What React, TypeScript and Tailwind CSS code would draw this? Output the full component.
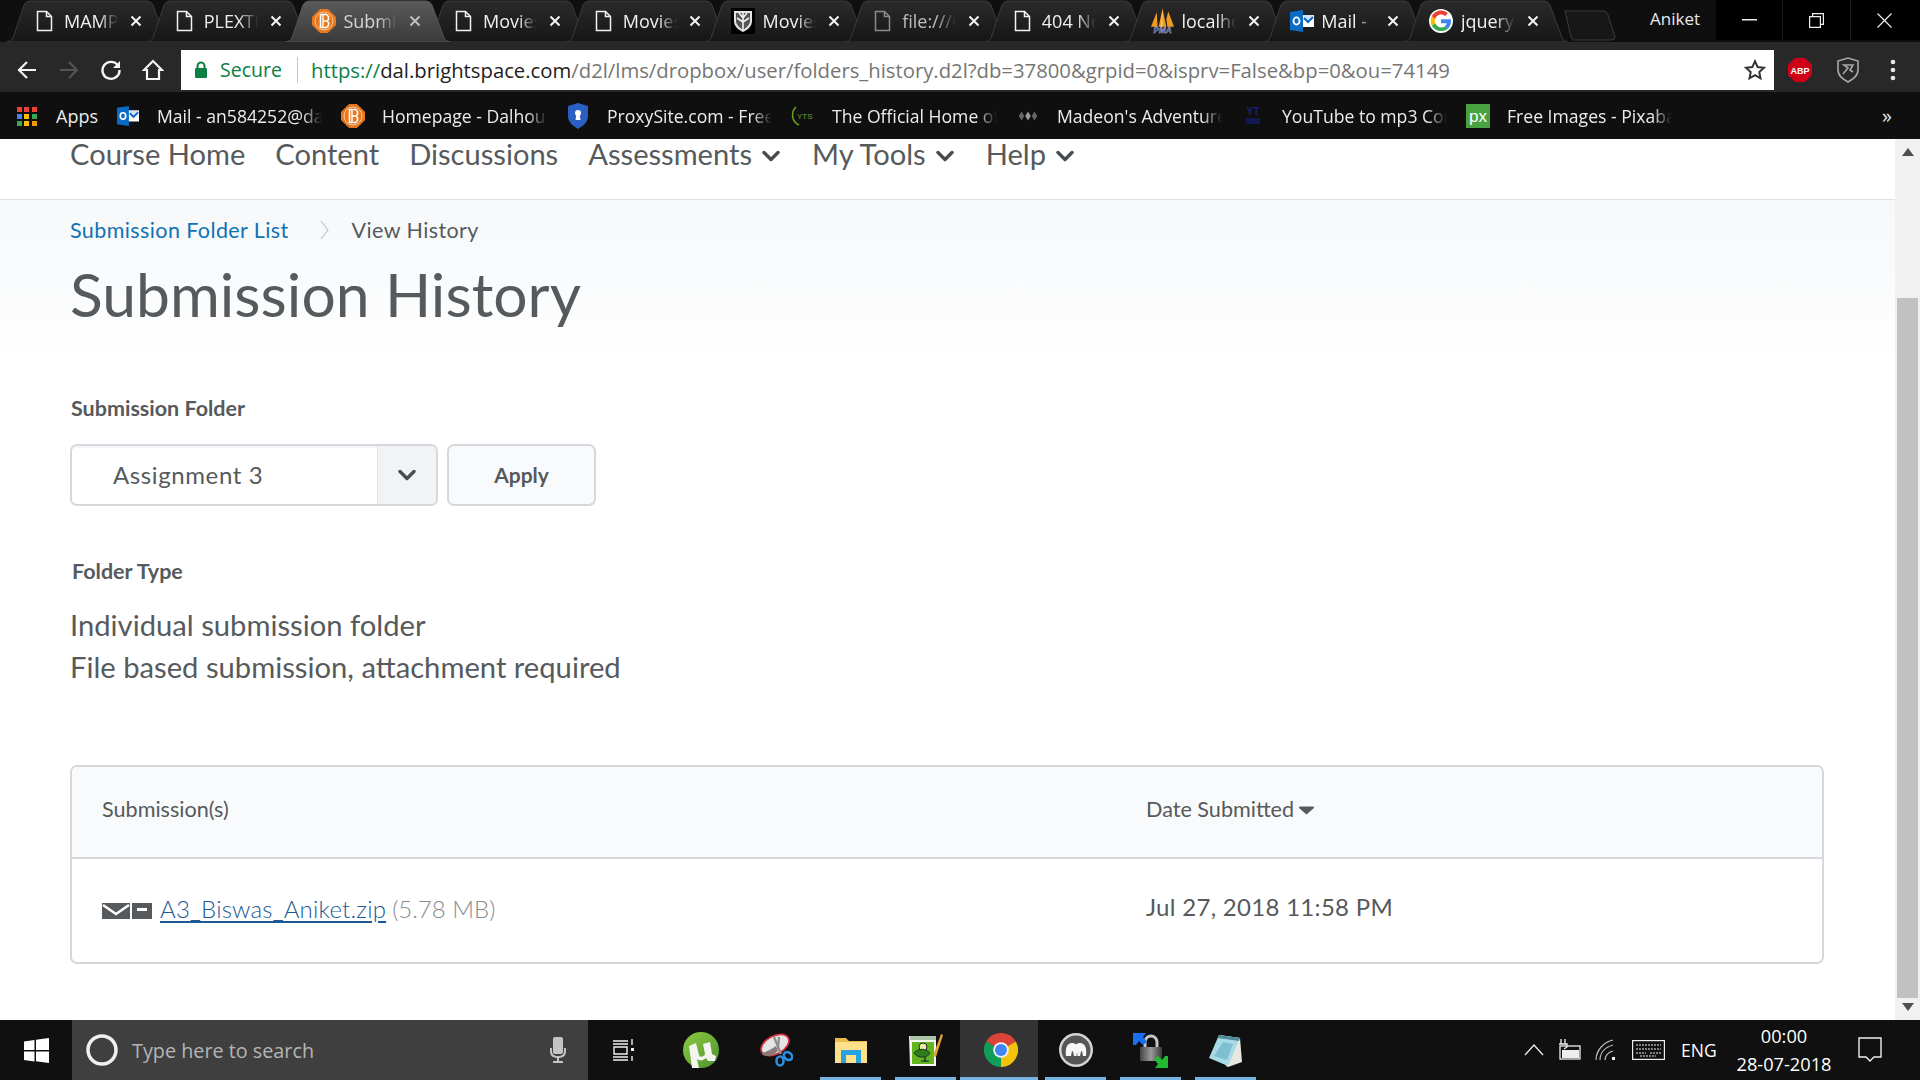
import React from "react";

const ui = "font-['Open_Sans','Noto_Sans',sans-serif]";

function Doc({ dim = false }: { dim?: boolean }) {
  return (
    <svg width="17" height="22" viewBox="0 0 17 22" fill="none" stroke={dim ? "#8a8a8a" : "#f2f2f2"} strokeWidth="1.5">
      <path d="M1.500 1.500h9l5 5v14h-14z" />
      <path d="M10.500 1.500v5h5" />
    </svg>
  );
}
function Bright({ size = 24 }: { size?: number }) {
  return (
    <svg width={size} height={size} viewBox="0 0 24 24">
      <path d="M8 .500h8l7.500 7.500v8L16 23.500H8L.500 16V8z" fill="#e8781e" strokeLinejoin="round" stroke="#e8781e" />
      <circle cx="12" cy="12" r="9" fill="none" stroke="#f9c896" strokeWidth="1" />
      <path d="M8.500 5.500h6l2 2v3l-1.500 1.500 1.500 1.500v3l-2 2h-6z" fill="none" stroke="#fff" strokeWidth="1.600" />
      <path d="M11 5.500v13M11 12h4" stroke="#fff" strokeWidth="1.400" />
    </svg>
  );
}
function Crest() {
  return (
    <svg width="24" height="26" viewBox="0 0 24 26">
      <rect width="24" height="26" fill="#000" />
      <path d="M3 3h18v10c0 6-5 9-9 11-4-2-9-5-9-11z" fill="#e4e4e4" />
      <path d="M5 5h14v8c0 4-4 7-7 9-3-2-7-5-7-9z" fill="#555" />
      <path d="M12 5v17M6 10l6 4 6-4M8 5l4 5 4-5" stroke="#f2f2f2" strokeWidth="1.600" fill="none" />
    </svg>
  );
}
function Pma() {
  return (
    <svg width="26" height="28" viewBox="0 0 26 28">
      <path d="M7 5 1 20h7zM9 20h8L13 1zM19 4l-2 8 1 8h7z" fill="#f29a1f" />
      <path d="M13 1l-2 19h2z" fill="#f8c96a" />
      <text x="13" y="27" textAnchor="middle" fontSize="8.500" fontWeight="700" fontStyle="italic" fill="#3f4f96" stroke="#cfd4ec" strokeWidth=".300" fontFamily="Liberation Sans">PMA</text>
    </svg>
  );
}
function Outlook({ size = 24 }: { size?: number }) {
  return (
    <svg width={size} height={size} viewBox="0 0 24 24">
      <path d="M12 6h12v12H12z" fill="#fff" />
      <path d="M12 6h12l-6 6z" fill="#cfe4f7" />
      <path d="M14 9l4 4 5-5" stroke="#0a66c2" strokeWidth="2" fill="none" />
      <path d="M0 3l13-2v22L0 21z" fill="#0a6cc4" />
      <ellipse cx="6.500" cy="12" rx="3" ry="3.600" fill="none" stroke="#fff" strokeWidth="1.800" />
    </svg>
  );
}
function GoogleG() {
  return (
    <svg width="24" height="24" viewBox="0 0 48 48">
      <circle cx="24" cy="24" r="24" fill="#fff" />
      <path fill="#4285F4" d="M44 24.500c0-1.400-.1-2.700-.4-4H24v8h11.300c-.5 2.600-2 4.800-4.200 6.300l6.500 5c3.900-3.500 6.400-8.900 6.400-15.300z" />
      <path fill="#34A853" d="M24 44c5.400 0 10-1.800 13.600-4.200l-6.500-5c-1.800 1.200-4.200 2-7.100 2-5.400 0-10-3.700-11.700-8.600l-6.700 5.200C9 39.400 16 44 24 44z" />
      <path fill="#FBBC05" d="M12.300 28.200c-.4-1.300-.7-2.700-.7-4.200s.3-2.900.7-4.200l-6.700-5.200C4.200 17.300 3.400 20.600 3.400 24s.8 6.700 2.200 9.400z" />
      <path fill="#EA4335" d="M24 11.200c3 0 5.800 1 8 3.100l5.800-5.800C34.100 5.100 29.500 3.200 24 3.200 16 3.200 9 7.800 5.600 14.600l6.700 5.200c1.700-4.900 6.300-8.600 11.700-8.600z" />
    </svg>
  );
}

const tabs = [
  { icon: <Doc />, title: "MAMP" },
  { icon: <Doc />, title: "PLEXTR" },
  { icon: <Bright />, title: "Submission", active: true },
  { icon: <Doc />, title: "Movies" },
  { icon: <Doc />, title: "Movies" },
  { icon: <Crest />, title: "Movies" },
  { icon: <Doc dim />, title: "file:///C", dim: true },
  { icon: <Doc />, title: "404 Not" },
  { icon: <Pma />, title: "localhost" },
  { icon: <Outlook />, title: "Mail - " },
  { icon: <GoogleG />, title: "jquery" },
];

function Tab({ icon, title, active, dim }: { icon: React.ReactNode; title: string; active?: boolean; dim?: boolean }) {
  return (
    <div className={`relative w-[139.700px] h-full shrink-0 flex items-center pl-[29px] ${active ? "z-10" : ""}`}>
      <svg className="absolute left-[4px] top-0" width="166" height="42" viewBox="0 0 166 42" fill="none">
        <defs>
          <linearGradient id="tabActive" x1="0" y1="0" x2="0" y2="1">
            <stop offset="0" stopColor="#5a5a5a" />
            <stop offset="1" stopColor="#3a3a3a" />
          </linearGradient>
          <linearGradient id="tabIdle" x1="0" y1="0" x2="0" y2="1">
            <stop offset="0" stopColor="#2a2a2a" />
            <stop offset="1" stopColor="#161616" />
          </linearGradient>
        </defs>
        <path
          d="M0 42q4 0 6-4L17 5q2-4 6-4H140q4 0 6 4L158 38q2 4 6 4z"
          fill={active ? "url(#tabActive)" : "url(#tabIdle)"}
          stroke={active ? "#555" : "#3a3a3a"}
          strokeWidth="1"
        />
      </svg>
      <div className="relative w-[25px] flex justify-center shrink-0">{icon}</div>
      <span
        className={`relative ml-[7px] w-[54px] overflow-hidden whitespace-nowrap text-[18px] leading-[24px] [mask-image:linear-gradient(to_right,black_65%,transparent)] ${
          dim ? "text-[#bdbdbd]" : active ? "text-[#d6d6d6]" : "text-[#f0f0f0]"
        }`}
      >
        {title}
      </span>
      <svg className="relative ml-[12px]" width="12" height="12" viewBox="0 0 12 12" stroke={active ? "#bdbdbd" : "#f5f5f5"} strokeWidth="2">
        <path d="M1.500 1.500l9 9M10.500 1.500l-9 9" />
      </svg>
    </div>
  );
}

function TabStrip() {
  return (
    <div className="relative flex h-[42px] bg-[#0f0f0f] pl-[3px] overflow-hidden">
      {tabs.map((t, i) => (
        <Tab key={i} {...t} />
      ))}
      <svg className="ml-[24px] mt-[10px] shrink-0" width="52" height="31" viewBox="0 0 52 31">
        <path d="M1 1h38q4 0 5 4l7 22q0 3-4 3H10q-2 0-3-3z" fill="#171717" stroke="#3b3b3b" />
      </svg>
      <div className="flex-1" />
      <span className="text-[#e8e8e8] text-[17px] leading-[38px] mr-[16px]">Aniket</span>
      <div className="flex h-[40px] w-[204px] bg-black shrink-0">
        <div className="w-[67px] flex items-center justify-center border-r border-[#1b1b1b]">
          <svg width="15" height="2"><rect width="15" height="1.500" fill="#eee" /></svg>
        </div>
        <div className="w-[68px] flex items-center justify-center border-r border-[#1b1b1b]">
          <svg width="15" height="15" viewBox="0 0 15 15" fill="none" stroke="#eee" strokeWidth="1.200">
            <path d="M.600 3.600h10.800v10.800H.600zM3.600 3.600V.600h10.800v10.800h-3" />
          </svg>
        </div>
        <div className="w-[69px] flex items-center justify-center pr-[2px]">
          <svg width="15" height="15" viewBox="0 0 15 15" stroke="#eee" strokeWidth="1.200">
            <path d="M.500.500l14 14M14.500.500l-14 14" />
          </svg>
        </div>
      </div>
    </div>
  );
}

function Toolbar() {
  return (
    <div className="flex items-center h-[50px] bg-[#282828] pt-[8px] pb-[2px]">
      <div className="w-[181px] shrink-0 flex items-center pl-[16px] gap-[20px]">
        <svg width="22" height="22" viewBox="0 0 22 22" fill="none" stroke="#f5f5f5" strokeWidth="2.200"><path d="M20 11H3M11 3l-8 8 8 8" /></svg>
        <svg width="22" height="22" viewBox="0 0 22 22" fill="none" stroke="#555" strokeWidth="2.200"><path d="M2 11h17M11 3l8 8-8 8" /></svg>
        <svg width="22" height="22" viewBox="0 0 22 22" fill="none" stroke="#f5f5f5" strokeWidth="2.400"><path d="M18 6.500A8.500 8.500 0 1 0 19.500 11" /><path d="M20 2v7h-7z" fill="#f5f5f5" stroke="none" /></svg>
        <svg width="22" height="22" viewBox="0 0 22 22" fill="none" stroke="#f5f5f5" strokeWidth="2.200"><path d="M11 2 2 11h3v9h12v-9h3z" /></svg>
      </div>
      <div className="flex-none w-[1593px] h-[40px] bg-white flex items-center">
        <div className="w-[39px] flex justify-center">
          <svg width="14" height="18" viewBox="0 0 14 18"><path d="M3.500 8V5a3.500 3.500 0 0 1 7 0v3" fill="none" stroke="#0b8043" strokeWidth="2" /><rect x="1" y="7" width="12" height="10" rx="1" fill="#0b8043" /></svg>
        </div>
        <span className="text-[#0b8043] text-[19.500px] leading-none w-[77px]">Secure</span>
        <div className="w-px h-[26px] bg-[#c8c8c8] mr-[13px]" />
        <span className="text-[20.300px] leading-none whitespace-nowrap flex-1">
          <span className="text-[#0b8043]">https://</span>
          <span className="text-[#212121]">dal.brightspace.com</span>
          <span className="text-[#757575]">/d2l/lms/dropbox/user/folders_history.d2l?db=37800&amp;grpid=0&amp;isprv=False&amp;bp=0&amp;ou=74149</span>
        </span>
        <svg className="mr-[8px]" width="22" height="22" viewBox="0 0 24 24" fill="none" stroke="#333" strokeWidth="2.200"><path d="M12 2.500l2.900 6.300 6.800.8-5 4.700 1.300 6.800-6-3.400-6 3.400 1.300-6.800-5-4.700 6.800-.8z" /></svg>
      </div>
      <div className="flex-1 flex items-center pl-[13px]">
        <svg width="26" height="26" viewBox="0 0 26 26">
          <path d="M8 1h10l7 7v10l-7 7H8l-7-7V8z" fill="#d00018" />
          <text x="13" y="17" textAnchor="middle" fontSize="9" fontWeight="700" fill="#fff" fontFamily="Liberation Sans">ABP</text>
        </svg>
        <svg className="ml-[23px]" width="24" height="28" viewBox="0 0 24 28" fill="none" stroke="#a8a8a8" strokeWidth="1.600">
          <path d="M2 5l10-3 10 3v9c0 6-5 9-10 12-5-3-10-6-10-12z" />
          <path d="M7 18l5-6-4-3h9l-3 5 3 2" />
        </svg>
        <svg className="ml-[30px]" width="6" height="24" viewBox="0 0 6 24" fill="#e8e8e8">
          <circle cx="3" cy="4" r="2.300" /><circle cx="3" cy="12" r="2.300" /><circle cx="3" cy="20" r="2.300" />
        </svg>
      </div>
    </div>
  );
}

function AppsIcon() {
  const colors = ["#ea4335", "#ea4335", "#ea4335", "#4285f4", "#fbbc05", "#34a853", "#34a853", "#fbbc05", "#f29900"];
  return (
    <div className="grid grid-cols-3 gap-[2px] w-[20px] shrink-0">
      {colors.map((c, i) => (
        <svg key={i} width="5" height="5"><rect width="5" height="5" fill={c} /></svg>
      ))}
    </div>
  );
}

const bookmarks: { icon: React.ReactNode; label: string }[] = [
  { icon: <Outlook size={22} />, label: "Mail - an584252@dal.ca" },
  { icon: <Bright size={24} />, label: "Homepage - Dalhousie" },
  {
    icon: (
      <svg width="20" height="26" viewBox="0 0 20 26">
        <path d="M10 0l10 3v10c0 6-5 10-10 13C5 23 0 19 0 13V3z" fill="#2a5fc4" />
        <circle cx="10" cy="10" r="3" fill="#fff" />
        <path d="M8.500 11h3l1 6h-5z" fill="#fff" />
      </svg>
    ),
    label: "ProxySite.com - Free Web",
  },
  {
    icon: (
      <svg width="24" height="24" viewBox="0 0 24 24" fill="none">
        <path d="M5 3a11 11 0 0 0 3 18" stroke="#6aa329" strokeWidth="1.500" />
        <text x="6" y="15" fontSize="8" fill="#6aa329" fontFamily="Liberation Sans">YTS</text>
      </svg>
    ),
    label: "The Official Home of YIFY",
  },
  {
    icon: (
      <svg width="26" height="14" viewBox="0 0 26 14" fill="#666">
        <path d="M13 2l3 5-3 5-3-5z" fill="#999" />
        <path d="M6 2l3 5-3 5-3-5zM20 2l3 5-3 5-3-5z" />
      </svg>
    ),
    label: "Madeon's Adventure Machine",
  },
  {
    icon: (
      <svg width="24" height="24" viewBox="0 0 24 24">
        <text x="12" y="11" textAnchor="middle" fontSize="10" fontWeight="700" fill="#1a237e" fontFamily="Liberation Sans">YT</text>
        <rect x="5" y="14" width="14" height="6" fill="#12194f" />
      </svg>
    ),
    label: "YouTube to mp3 Converter",
  },
  {
    icon: (
      <svg width="24" height="24" viewBox="0 0 24 24">
        <rect width="24" height="24" fill="#48a23f" />
        <text x="12" y="18" textAnchor="middle" fontSize="17" fill="#fff" fontFamily="Liberation Sans">px</text>
      </svg>
    ),
    label: "Free Images - Pixabay",
  },
];

function Bookmarks() {
  return (
    <div className="flex items-center h-[47px] bg-[#0f0f0f] pl-[17px] pt-[1px]">
      <AppsIcon />
      <span className="ml-[19px] w-[60px] text-[#ececec] text-[18px] leading-none shrink-0">Apps</span>
      {bookmarks.map((b) => (
        <div key={b.label} className="w-[225px] shrink-0 flex items-center">
          <div className="w-[24px] flex justify-center shrink-0">{b.icon}</div>
          <span className="ml-[17px] w-[165px] overflow-hidden whitespace-nowrap text-[#ececec] text-[17.600px] leading-[24px] [mask-image:linear-gradient(to_right,black_88%,transparent)]">
            {b.label}
          </span>
        </div>
      ))}
      <div className="flex-1" />
      <span className="text-[#e8e8e8] text-[20px] leading-none mr-[28px]">»</span>
    </div>
  );
}

function Chevron({ className, color = "#494c4e" }: { className?: string; color?: string }) {
  return (
    <svg className={className} width="18" height="12" viewBox="0 0 18 12" fill="none" stroke={color} strokeWidth="3.400" strokeLinecap="round" strokeLinejoin="round">
      <path d="M2 2.500L9 9.500l7-7" />
    </svg>
  );
}

function Nav() {
  const items: [string, boolean][] = [
    ["Course Home", false],
    ["Content", false],
    ["Discussions", false],
    ["Assessments", true],
    ["My Tools", true],
    ["Help", true],
  ];
  return (
    <div className="h-[61px] shrink-0 bg-white border-b border-[#dfe3e7] pl-[70px] flex gap-[30px] overflow-hidden">
      {items.map(([label, menu]) => (
        <div key={label} className="flex items-center gap-[10px] h-[30px] text-[#565a5c] text-[29.100px] leading-[30px]">
          {label}
          {menu && <Chevron className="mt-[3px] mr-[2px]" />}
        </div>
      ))}
    </div>
  );
}

function Content() {
  return (
    <div className="flex-1 min-w-0 flex flex-col overflow-hidden bg-white text-[#565a5c] font-['Lato',sans-serif]">
      <Nav />
      <div className="bg-gradient-to-b from-[#f6f8fa] via-[#fafbfc] to-white pl-[70px] h-[160px] pt-[15px]">
        <div className="flex items-center h-[30px] text-[21.500px] leading-[30px] tracking-[0.4px]">
          <span className="text-[#0f72b5]">Submission Folder List</span>
          <svg className="ml-[31px] mr-[23px]" width="9" height="20" viewBox="0 0 9 20" fill="none" stroke="#c2c7cc" strokeWidth="1.200"><path d="M1 1l7 9-7 9" /></svg>
          <span>View History</span>
        </div>
        <h1 className="text-[60.600px] leading-[72px] font-normal mt-[13px]">Submission History</h1>
      </div>
      <div className="pl-[70px] pr-[71px]">
        <div className="ml-px mt-[36px] text-[21.500px] leading-[24px] font-bold">Submission Folder</div>
        <div className="flex mt-[24px] gap-[9px]">
          <div className="w-[368px] h-[62px] flex rounded-[7px] border-2 border-[#d5d9dd] bg-white overflow-hidden">
            <div className="flex-1 pl-[41px] flex items-center text-[24px] tracking-[0.6px] shadow-[inset_0_2px_0_#f3f5f7]">Assignment 3</div>
            <div className="w-[59px] bg-[#f1f3f5] border-l border-[#dfe3e7] flex items-center justify-center">
              <Chevron />
            </div>
          </div>
          <div className="w-[149px] h-[62px] rounded-[7px] border-2 border-[#d5d9dd] bg-[#f9fafb] flex items-center justify-center text-[21px] font-bold">
            Apply
          </div>
        </div>
        <div className="ml-[2px] mt-[53px] text-[21.500px] leading-[24px] font-bold">Folder Type</div>
        <div className="mt-[21px] text-[29.200px] leading-[42px]">
          <div>Individual submission folder</div>
          <div>File based submission, attachment required</div>
        </div>
        <div className="mt-[77px] h-[199px] rounded-[7px] border-2 border-[#d5d9dd] overflow-hidden flex flex-col">
          <div className="h-[92px] bg-[#f9fafb] border-b-2 border-[#d5d9dd] flex items-center pb-[5px] text-[21.600px] text-[#565a5c]">
            <div className="w-[1074px] pl-[30px]">Submission(s)</div>
            <div className="flex items-center gap-[5px]">
              Date Submitted
              <svg className="mt-[3px]" width="15" height="9" viewBox="0 0 15 9"><path d="M1 .500h13a1 1 0 0 1 .7 1.700L7.500 8.500.300 2.200A1 1 0 0 1 1 .500z" fill="#565a5c" /></svg>
            </div>
          </div>
          <div className="flex-1 flex items-center pb-[3px] text-[24px]">
            <div className="w-[1074px] pl-[30px] flex items-center">
              <svg width="52" height="18" viewBox="0 0 52 18" className="mt-[4px]">
                <path d="M0 1h28v16H0z" fill="#565a5c" />
                <path d="M1 3l13 9 13-9" fill="none" stroke="#fff" strokeWidth="2.500" />
                <path d="M30 1h20v16H30z" fill="#565a5c" />
                <rect x="35" y="6" width="10" height="3" fill="#fff" />
              </svg>
              <span className="ml-[6px] text-[#1d5a94] underline underline-offset-[3px] font-light tracking-[0.2px]">A3_Biswas_Aniket.zip</span>
              <span className="ml-[6px] text-[#8a8d8f] font-light">(5.78 MB)</span>
            </div>
            <div className="-mt-[4px] tracking-[0.3px]">Jul 27, 2018 11:58 PM</div>
          </div>
        </div>
      </div>
    </div>
  );
}

function Scrollbar() {
  return (
    <div className="w-[25px] shrink-0 bg-[#f1f1f1] flex flex-col items-center">
      <svg className="mt-[9px]" width="12" height="8"><path d="M6 0l6 8H0z" fill="#505050" /></svg>
      <div className="w-[21px] h-[700px] bg-[#c1c1c1] mt-[142px]" />
      <svg className="mt-[5px]" width="12" height="8"><path d="M0 0h12L6 8z" fill="#505050" /></svg>
    </div>
  );
}

function TaskIcon({ children, line }: { children: React.ReactNode; line?: boolean }) {
  return (
    <div className="relative h-full flex items-center justify-center w-[75px] shrink-0">
      {children}
      {line && <div className="absolute bottom-0 left-[7px] right-[7px] h-[3px] bg-[#76b4e2]" />}
    </div>
  );
}

function Taskbar() {
  return (
    <div className="h-[60px] shrink-0 bg-[#101010] flex items-center">
      <div className="w-[72px] flex justify-center">
        <svg width="25" height="25" viewBox="0 0 25 25" fill="#fff">
          <path d="M0 3.500l10.500-1.500v10H0zM12 1.800L25 0v12H12zM0 13.500h10.500v10L0 22zM12 13.500h13V25l-13-1.800z" />
        </svg>
      </div>
      <div className="w-[516px] h-full bg-[#3f3f3f] flex items-center">
        <svg className="ml-[13px]" width="34" height="34" viewBox="0 0 34 34" fill="none" stroke="#f0f0f0" strokeWidth="3.500"><circle cx="17" cy="17" r="14" /></svg>
        <span className="ml-[13px] mt-[2px] text-[#b5b5b5] text-[19.800px]">Type here to search</span>
        <div className="flex-1" />
        <svg className="mr-[21px]" width="18" height="28" viewBox="0 0 18 28" fill="#c4c4c4">
          <rect x="4" y="1" width="10" height="17" rx="2" />
          <path d="M1 12v3c0 5 3 7 8 7s8-2 8-7v-3h-2v3c0 3-2 5-6 5s-6-2-6-5v-3z" />
          <rect x="8" y="22" width="2" height="3" />
          <rect x="4" y="25" width="10" height="2" />
        </svg>
      </div>
      <div className="w-[72px] flex justify-center">
        <svg width="24" height="24" viewBox="0 0 24 24" fill="none" stroke="#f0f0f0" strokeWidth="1.400">
          <path d="M1 3h15M1 6h15M2 9h13v7H2zM1 19h15M1 22h15" />
          <path d="M20 1v6M20 18v5" />
          <rect x="19" y="10" width="3" height="3" fill="#f0f0f0" stroke="none" />
        </svg>
      </div>
      <div className="flex h-full ml-[3px]">
        <TaskIcon>
          <svg width="36" height="36" viewBox="0 0 36 36">
            <defs>
              <linearGradient id="ut" x1="0" y1="0" x2="1" y2="1">
                <stop offset="0" stopColor="#8ecb3f" />
                <stop offset="1" stopColor="#4b9230" />
              </linearGradient>
            </defs>
            <circle cx="18" cy="18" r="18" fill="url(#ut)" />
            <path d="M6 14l7-3 3 12c1 3 5 2 6-1l-2-10 7-2 2 12 4 2-1 5-7 0-2-3c-3 3-7 3-9 1l2 9-7 0z" fill="#f4f4f0" />
          </svg>
        </TaskIcon>
        <TaskIcon>
          <svg width="34" height="34" viewBox="0 0 34 34" fill="none">
            <ellipse cx="16" cy="12" rx="15" ry="9" transform="rotate(-28 16 12)" fill="#e4e4e4" stroke="#d2303a" strokeWidth="1.800" />
            <path d="M3 20c4-1 10-4 14-7l2 5c-3 3-6 5-10 5-4 0-6-1-6-3z" fill="#8a7a7a" />
            <path d="M15 4l7 17M20 4l-1 12" stroke="#8e8e8e" strokeWidth="2.200" />
            <ellipse cx="29" cy="23" rx="3.500" ry="4.500" transform="rotate(-50 29 23)" stroke="#2b8fe0" strokeWidth="2.600" />
            <ellipse cx="21" cy="28" rx="3.500" ry="4.500" stroke="#2b8fe0" strokeWidth="2.600" />
          </svg>
        </TaskIcon>
        <TaskIcon line>
          <svg width="32" height="26" viewBox="0 0 32 26" className="-mt-[1px]">
            <path d="M0 1h11l3 3h18v22H0z" fill="#e9bc4c" />
            <rect x="0" y="5" width="32" height="21" fill="#fde08a" />
            <path d="M6 13h20v13h-5v-8H11v8H6z" fill="#27a3e4" />
          </svg>
        </TaskIcon>
        <TaskIcon line>
          <svg width="34" height="32" viewBox="0 0 34 32">
            <path d="M0 2h27v30H1z" fill="#f6f6f2" />
            <path d="M1 2h26v4H1z" fill="#a9c4a6" />
            <path d="M3 8h22v22H3z" fill="#63b51d" />
            <circle cx="14" cy="13" r="4" fill="#e9ef9a" stroke="#223" strokeWidth="1" />
            <path d="M5 19c4-5 12-5 16 0-2 5-12 6-16 0z" fill="#2f7d1a" stroke="#123" strokeWidth=".800" />
            <path d="M12 27h8M16 23v5" stroke="#123" strokeWidth="1.200" />
            <path d="M24 22 32 0l2 1-7 22z" fill="#e1a32c" />
          </svg>
        </TaskIcon>
        <div className="relative h-full w-[78px] -ml-[3px] pl-[3px] shrink-0 flex items-center justify-center bg-[#333]">
          <svg width="34" height="34" viewBox="0 0 48 48">
            <path d="M24 24 3.200 12A24 24 0 0 1 44.800 12Z" fill="#db4437" />
            <path d="M24 24 44.800 12A24 24 0 0 1 24 48Z" fill="#f4c20d" />
            <path d="M24 24 24 48A24 24 0 0 1 3.200 12Z" fill="#0f9d58" />
            <circle cx="24" cy="24" r="11" fill="#f4f4f4" />
            <circle cx="24" cy="24" r="8.500" fill="#4285f4" />
          </svg>
          <div className="absolute bottom-0 left-0 right-0 h-[3px] bg-[#76b4e2]" />
        </div>
        <TaskIcon line>
          <svg width="34" height="34" viewBox="0 0 34 34">
            <circle cx="17" cy="17" r="17" fill="#d6d6d6" />
            <circle cx="17" cy="17" r="14.500" fill="#565656" />
            <path d="M7 23c-1-8 1-13 6-13 1.500 0 3 .5 4 1.500 1-1 2.500-1.500 4-1.500 5 0 7 5 6 13h-3l-1-5-1 .5-1 4.500h-2.500l-.5-4-.5 4H15l-1-4.500-1-.5-1 5z" fill="#f7f7f7" />
          </svg>
        </TaskIcon>
        <TaskIcon line>
          <svg width="36" height="36" viewBox="0 0 36 36" fill="none">
            <defs>
              <linearGradient id="lock" x1="0" y1="0" x2="1" y2="0">
                <stop offset="0" stopColor="#444" />
                <stop offset=".5" stopColor="#9a9a9a" />
                <stop offset="1" stopColor="#3a3a3a" />
              </linearGradient>
            </defs>
            <path d="M12 16V10a6 6 0 0 1 12 0v6" stroke="#c6c6c6" strokeWidth="3" />
            <rect x="7" y="15" width="22" height="14" rx="1" fill="url(#lock)" />
            <path d="M0 1h13l-3 4 4 5-4 3-4-4-3 4H0z" fill="#1a6ff0" />
            <path d="M35 36H22l3-4-4-5 4-3 4 4 3-4h3z" fill="#22b82f" />
          </svg>
        </TaskIcon>
        <TaskIcon line>
          <svg width="33" height="33" viewBox="0 0 33 33">
            <path d="M10 1l21 3 2 24-14 5-2-1z" fill="#e8e8e0" />
            <path d="M10 1 31 4 19 32 0 24z" fill="#a9dbe6" />
            <path d="M5 22 14 8l10 2-6 16z" fill="#7ec0cf" />
            <path d="M10 1 31 4l-1 3L9 4z" fill="#4f8a98" />
          </svg>
        </TaskIcon>
      </div>
      <div className="flex-1" />
      <div className="flex items-center text-white">
        <svg width="20" height="12" viewBox="0 0 20 12" fill="none" stroke="#eee" strokeWidth="1.300"><path d="M1 11l9-10 9 10" /></svg>
        <svg className="ml-[13px]" width="24" height="24" viewBox="0 0 24 24" fill="none" stroke="#eee" strokeWidth="1.300">
          <rect x="3" y="8" width="20" height="13" />
          <rect x="5" y="12" width="17" height="8" fill="#eee" stroke="none" />
          <path d="M4 1v5M8 1v5M2 6h8v3l-3 2" />
        </svg>
        <svg className="ml-[14px]" width="22" height="22" viewBox="0 0 22 22" fill="none" stroke="#bbb" strokeWidth="1.200">
          <path d="M1 21C1 11 9 3 18 1M5 21c0-8 6-13 13-15M10 21c0-4 3-8 8-9" />
          <rect x="17" y="18" width="3" height="3" fill="#eee" stroke="none" />
        </svg>
        <svg className="ml-[15px]" width="33" height="20" viewBox="0 0 33 20" fill="none" stroke="#eee" strokeWidth="1.200">
          <rect x=".600" y=".600" width="31.800" height="18.800" />
          <path d="M4 5h25M4 9h25M4 13h10M18 13h11M8 16h16" strokeDasharray="2 1" />
        </svg>
        <span className="ml-[16px] text-[17.500px] w-[44px]">ENG</span>
        <div className="ml-[7px] w-[104px] flex flex-col items-center text-[18.200px] leading-[28px]">
          <span>00:00</span>
          <span>28-07-2018</span>
        </div>
        <svg className="ml-[22px] mr-[38px]" width="24" height="26" viewBox="0 0 24 26" fill="none" stroke="#eee" strokeWidth="1.400">
          <path d="M1 1h22v19h-7l-4 4-4-4H1z" />
        </svg>
      </div>
    </div>
  );
}

export default function App() {
  return (
    <div className={`w-[1920px] h-[1080px] flex flex-col overflow-hidden ${ui}`}>
      <TabStrip />
      <Toolbar />
      <Bookmarks />
      <div className="flex flex-1 min-h-0">
        <Content />
        <Scrollbar />
      </div>
      <Taskbar />
    </div>
  );
}
